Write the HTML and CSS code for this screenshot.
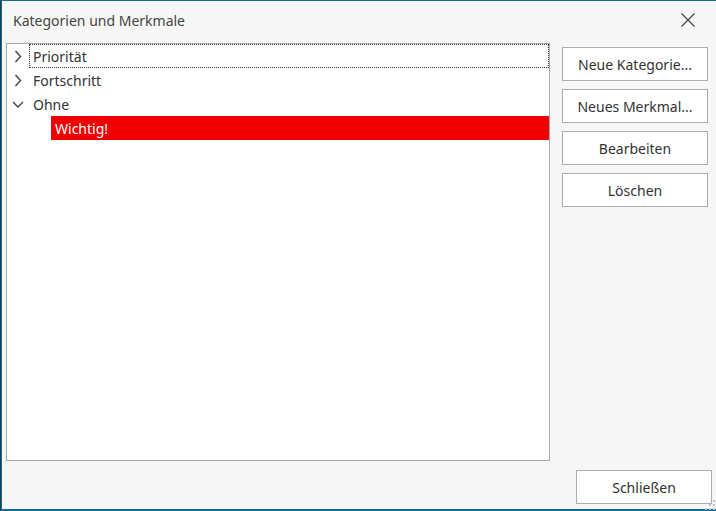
FILE: index.html
```html
<!DOCTYPE html>
<html lang="de">
<head>
<meta charset="utf-8">
<title>Kategorien und Merkmale</title>
<link rel="stylesheet" href="styles.css">
</head>
<body>
<div class="window">
  <div class="titlebar">
    <div class="title">Kategorien und Merkmale</div>
    <svg class="close" width="14" height="14" viewBox="0 0 14 14"><path d="M0.5 0.5 L13.5 13.5 M13.5 0.5 L0.5 13.5" stroke="#444" stroke-width="1.2" fill="none"/></svg>
  </div>
  <div class="main">
    <div class="tree">
      <div class="row">
        <div class="toggle"><svg width="22" height="24" viewBox="0 0 22 24"><polyline points="8.5,7 13.5,12.5 8.5,18" fill="none" stroke="#444" stroke-width="1.4"/></svg></div>
        <div class="label focused">Priorität</div>
      </div>
      <div class="row">
        <div class="toggle"><svg width="22" height="24" viewBox="0 0 22 24"><polyline points="8.5,7 13.5,12.5 8.5,18" fill="none" stroke="#444" stroke-width="1.4"/></svg></div>
        <div class="label">Fortschritt</div>
      </div>
      <div class="row">
        <div class="toggle"><svg width="22" height="24" viewBox="0 0 22 24"><polyline points="6,10 11,15 16,10" fill="none" stroke="#444" stroke-width="1.4"/></svg></div>
        <div class="label">Ohne</div>
      </div>
      <div class="row child">
        <div class="label selected">Wichtig!</div>
      </div>
    </div>
    <div class="buttons">
      <button class="btn">Neue Kategorie...</button>
      <button class="btn">Neues Merkmal...</button>
      <button class="btn">Bearbeiten</button>
      <button class="btn">Löschen</button>
    </div>
  </div>
  <div class="footer">
    <button class="btn close-btn">Schließen</button>
  </div>
  <svg class="grip" width="12" height="12" viewBox="0 0 12 12">
    <rect x="9" y="1" width="2" height="2" fill="#c4c4c4"/>
    <rect x="5" y="5" width="2" height="2" fill="#c4c4c4"/>
    <rect x="9" y="5" width="2" height="2" fill="#c4c4c4"/>
    <rect x="1" y="9" width="2" height="2" fill="#c4c4c4"/>
    <rect x="5" y="9" width="2" height="2" fill="#c4c4c4"/>
    <rect x="9" y="9" width="2" height="2" fill="#c4c4c4"/>
  </svg>
</div>
</body>
</html>
```
FILE: styles.css
```css
* { box-sizing: border-box; }
html, body { margin: 0; padding: 0; }
body {
  background: #2b3a42;
  width: 716px;
  height: 511px;
  overflow: hidden;
  font-family: "Noto Sans", "Open Sans", sans-serif;
  font-size: 14px;
  color: #333;
}
.window {
  position: relative;
  margin-left: 1px;
  width: 715px;
  height: 511px;
  background: #f7f7f7;
  border-left: 1px solid #0e6b9c;
  border-top: 1px solid #0e6b9c;
  border-bottom: 2px solid #0e6b9c;
  display: flex;
  flex-direction: column;
}
.titlebar {
  height: 42px;
  display: flex;
  justify-content: space-between;
  align-items: flex-start;
  padding: 0 21px 0 11px;
}
.title {
  color: #444;
  font-size: 14px;
  line-height: 20px;
  padding-top: 10px;
}
.close { margin-top: 12px; }
.main {
  display: flex;
  align-items: flex-start;
  padding-left: 4px;
  height: 418px;
}
.tree {
  width: 544px;
  height: 418px;
  background: #fff;
  border: 1px solid #a9a9a9;
}
.row {
  display: flex;
  height: 24px;
}
.row.child { padding-left: 44px; }
.toggle { width: 22px; height: 24px; flex: none; }
.toggle svg { display: block; }
.label {
  flex: 1;
  height: 24px;
  line-height: 22px;
  padding: 1px 3px 0;
  border: 1px solid transparent;
  color: #333;
  white-space: nowrap;
}
.label.focused { border: 1px dotted #333; }
.label.selected { background: #f00000; color: #fff; }
.buttons {
  margin-left: 12px;
  margin-top: 4px;
  display: flex;
  flex-direction: column;
  gap: 8px;
}
.btn {
  width: 146px;
  height: 34px;
  background: #fff;
  border: 1px solid #adadad;
  font-family: "Noto Sans", "Open Sans", sans-serif;
  font-size: 14px;
  color: #333;
  padding: 0;
  margin: 0;
}
.footer {
  display: flex;
  justify-content: flex-end;
  padding-top: 9px;
  padding-right: 4px;
}
.close-btn { width: 136px; }
.grip {
  position: absolute;
  right: 0;
  bottom: -2px;
}
```
